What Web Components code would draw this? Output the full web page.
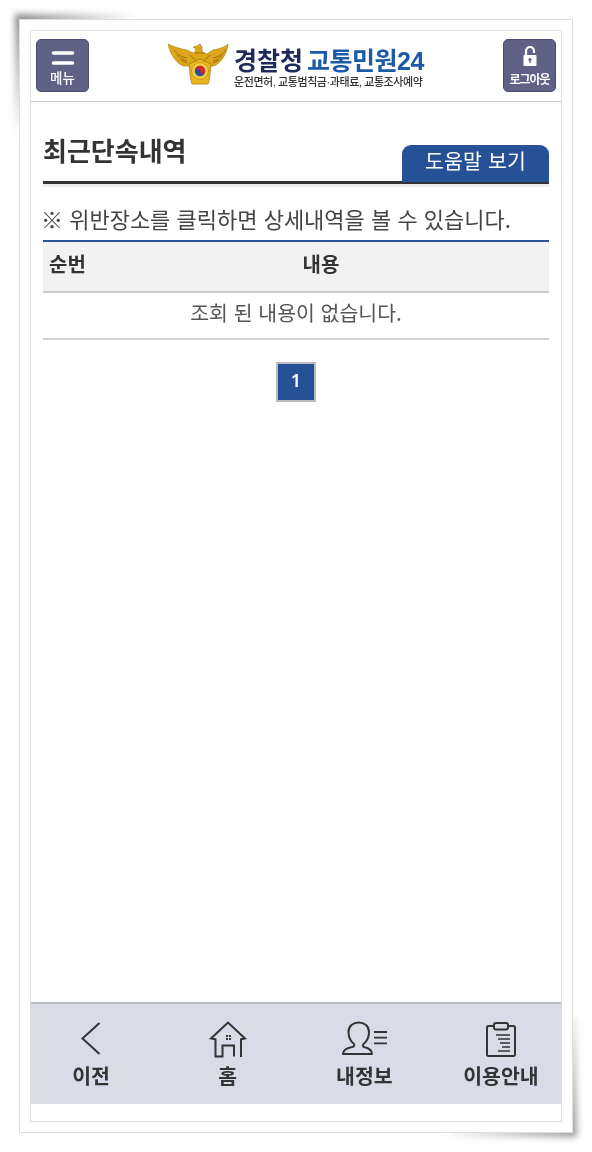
<!DOCTYPE html>
<html lang="ko">
<head>
<meta charset="utf-8">
<title>최근단속내역</title>
<style>
    html, body { margin: 0; background: #fff; }
    body {
        height: 1152px;
        overflow: hidden;
        font-family: "Noto Sans CJK KR", "Noto Sans", sans-serif;
        color: #333;
    }
</style>
</head>
<body>
<app-frame>
    <top-bar slot="top">
        <side-button slot="left" label="메뉴">
            <svg width="24" height="16" viewBox="0 0 24 16"><path d="M2.500 3h19M2.500 13h19" stroke="#fff" stroke-width="3.600" stroke-linecap="round"/></svg>
        </side-button>
        <brand-logo slot="center"></brand-logo>
        <side-button slot="right" label="로그아웃" small>
            <svg width="14" height="21" viewBox="0 0 14 21">
                <path d="M3 9V5a4 4 0 0 1 8 0V7" fill="none" stroke="#fff" stroke-width="2.200"/>
                <rect x=".5" y="9" width="13" height="11" rx="1" fill="#fff"/>
                <circle cx="7" cy="13.500" r="1.600" fill="#5f6285"/>
                <rect x="6.300" y="13.500" width="1.400" height="3.500" fill="#5f6285"/>
            </svg>
        </side-button>
    </top-bar>
    <section-title>최근단속내역<span slot="action">도움말 보기</span></section-title>
    <notice-line>※ 위반장소를 클릭하면 상세내역을 볼 수 있습니다.</notice-line>
    <result-table first="순번" second="내용">조회 된 내용이 없습니다.</result-table>
    <page-nav current="1"></page-nav>
    <bottom-nav slot="bottom">
        <nav-item label="이전">
            <svg width="40" height="38" viewBox="0 0 40 38"><path d="M28.500 3 11.500 18.500 28.500 34" fill="none" stroke="#333" stroke-width="2"/></svg>
        </nav-item>
        <nav-item label="홈">
            <svg width="40" height="38" viewBox="0 0 40 38" fill="none" stroke="#333" stroke-width="2">
                <path d="M8 19.500 3 18.500 20 2.500l17 16-4.500 1"/>
                <path d="M7.500 18.500V36.500h7V25.500h11.500V36.500M33 18.500V37" />
                <path d="M18 15h2v2h-2zM21 15h2v2h-2zM18 18h2v2h-2zM21 18h2v2h-2z" fill="#333" stroke="none"/>
            </svg>
        </nav-item>
        <nav-item label="내정보">
            <svg width="46" height="38" viewBox="0 0 46 38" fill="none" stroke="#333" stroke-width="2">
                <path d="M13 24C9 21 7.500 17 7.500 12 7.500 6 12 2.500 17.700 2.500S28 6 28 12c0 5-1.500 9-5.500 12-1 1-.5 2.500.5 3 4 1 8 3 8 7H2c0-4 4-6 9-7 2-.5 3-1.500 2-3z" stroke-linejoin="round"/>
                <path d="M33 12h13M33 17.700h13M33 23.300h13" stroke-width="1.800"/>
            </svg>
        </nav-item>
        <nav-item label="이용안내">
            <svg width="34" height="38" viewBox="0 0 34 38" fill="none" stroke="#333" stroke-width="2">
                <path d="M10 6H4.500A1.500 1.500 0 0 0 3 7.500v27A1.500 1.500 0 0 0 4.500 36h25a1.500 1.500 0 0 0 1.500-1.500v-27A1.500 1.500 0 0 0 29.500 6H24"/>
                <rect x="10" y="3" width="14" height="6.500" rx="2"/>
                <path d="M12 15h14M14 19h12M16 23h10M18 27h8M14 31h12" stroke-width="1.500"/>
            </svg>
        </nav-item>
    </bottom-nav>
</app-frame>

<template id="app-frame-tpl">
    <style>
        :host {
            display: block;
            position: relative;
            isolation: isolate;
            box-sizing: border-box;
            width: 554px;
            height: 1114px;
            margin: 19px 0 0 19px;
        }
        .shade {
            position: absolute;
            z-index: -1;
            filter: blur(3px);
        }
        .tl {
            left: -4px;
            top: -5px;
            width: 125px;
            height: 125px;
            background: linear-gradient(135deg, #888 0, rgba(160,160,160,0) 50%);
        }
        .br {
            right: -4px;
            bottom: -4px;
            width: 160px;
            height: 120px;
            background: linear-gradient(315deg, #999 0, rgba(180,180,180,0) 50%);
        }
        .sheet {
            box-sizing: border-box;
            height: 100%;
            padding: 10px;
            background: #fff;
            border: 1px solid #ddd;
        }
        .screen {
            box-sizing: border-box;
            height: 100%;
            display: flex;
            flex-direction: column;
            border: 1px solid #ddd;
            border-top-color: #e8e8e8;
            filter: blur(.35px);
        }
        .body { flex: 1; padding: 0 12px; }
        .gap { height: 17px; }
    </style>
    <div class="shade tl"></div>
    <div class="shade br"></div>
    <div class="sheet">
        <div class="screen">
            <slot name="top"></slot>
            <div class="body"><slot></slot></div>
            <slot name="bottom"></slot>
            <div class="gap"></div>
        </div>
    </div>
</template>

<template id="top-bar-tpl">
    <style>
        :host {
            display: flex;
            box-sizing: border-box;
            height: 71px;
            padding: 8px 5px 0;
            align-items: flex-start;
            justify-content: space-between;
            border-bottom: 1px solid #ccc;
        }
    </style>
    <slot name="left"></slot>
    <slot name="center"></slot>
    <slot name="right"></slot>
</template>

<template id="side-button-tpl">
    <style>
        :host {
            display: flex;
            flex-direction: column;
            align-items: center;
            box-sizing: border-box;
            width: 53px;
            height: 53px;
            background: #5f6285;
            border: 1px solid #4b4e70;
            border-radius: 5px;
            color: #fff;
        }
        .icon { height: 26px; display: flex; align-items: flex-end; }
        :host([small]) .icon { height: 27px; }
        .label { font-size: 13.500px; font-weight: 500; line-height: 15px; margin-top: 4px; white-space: nowrap; }
        :host([small]) .label { font-size: 12px; font-weight: 700; margin-top: 4px; letter-spacing: -1px; }
    </style>
    <div class="icon"><slot></slot></div>
    <div class="label"></div>
</template>

<template id="brand-logo-tpl">
    <style>
        :host { display: flex; width: 256px; height: 44px; margin-top: 4px; align-items: flex-start; }
        svg { flex: none; display: block; }
        .words { margin-left: 2px; margin-top: 5px; }
        .name {
            font-family: "Liberation Sans", "Noto Sans CJK KR", sans-serif;
            font-size: 25px;
            line-height: 27px;
            font-weight: 700;
            white-space: nowrap;
            color: #1e2a5e;
        }
        .name span { color: #1b5aa8; margin-left: 4px; letter-spacing: -.5px; }
        .sub {
            font-family: "Liberation Sans", "Noto Sans CJK KR", sans-serif;
            font-size: 11px;
            line-height: 13px;
            font-weight: 500;
            margin-top: 1px;
            color: #333;
            white-space: nowrap;
            letter-spacing: -.42px;
        }
    </style>
    <svg width="64" height="42" viewBox="0 0 64 42">
        <path d="M0 1C6 4 13 6 19 7l6 3 2-1 1-3-3-2 4-1 3-2 2 3 0 4 2 2 3 1 6-4c6-1 12-3 15-6-1 10-7 19-14 22l-6 0-3 3H24l-3-3-6 0C8 20 2 11 0 1z" fill="#dea71b" stroke="#a9780f" stroke-width=".6"/>
        <path d="M6 7c4 5 8 7 13 8M9 12c3 3 6 5 10 6M13 17c2 1 4 2 6 3M58 7c-4 5-8 7-13 8M55 12c-3 3-6 5-10 6M51 17c-2 1-4 2-6 3M27 10l10 0M22 12l6 6M42 12l-6 6" fill="none" stroke="#96690c" stroke-width=".9"/>
        <path d="M32 16l11 5 -1.500 14-1.500 6H24l-1.500-6L21 21z" fill="#ecb71e" stroke="#a9780f" stroke-width=".8"/>
        <circle cx="32" cy="28" r="8.500" fill="#f4cc3f" stroke="#b98b12" stroke-width=".7"/>
        <circle cx="32" cy="28" r="5.200" fill="#2c4f9e"/>
        <path d="M26.800 28a5.200 5.200 0 0 1 10.400 0 2.600 2.600 0 0 1-5.200 0 2.600 2.600 0 0 0-5.200 0z" fill="#d3272e"/>
    </svg>
    <div class="words">
        <div class="name">경찰청<span>교통민원24</span></div>
        <div class="sub">운전면허, 교통범칙금·과태료, 교통조사예약</div>
    </div>
</template>

<template id="section-title-tpl">
    <style>
        :host {
            display: flex;
            justify-content: space-between;
            box-sizing: border-box;
            height: 39px;
            margin-top: 43px;
            border-bottom: 3px solid #333;
            box-shadow: 0 3px 0 #eee;
        }
        h2 { margin: -2px 0 0; font-size: 26px; line-height: 14px; font-weight: 700; color: #333; }
        .tab {
            box-sizing: border-box;
            width: 147px;
            height: 37px;
            border-radius: 9px 9px 0 0;
            background: #265196;
            color: #fff;
            font-size: 20.500px;
            line-height: 31px;
            text-align: center;
            letter-spacing: .2px;
        }
    </style>
    <h2><slot></slot></h2>
    <div class="tab"><slot name="action"></slot></div>
</template>

<template id="notice-line-tpl">
    <style>
        :host {
            display: block;
            margin: 20px 0 0 -2px;
            padding-bottom: 8px;
            font-size: 22px;
            line-height: 28px;
            color: #444;
            white-space: nowrap;
        }
    </style>
    <slot></slot>
</template>

<template id="result-table-tpl">
    <style>
        :host {
            display: block;
            border-top: 2px solid #2d5596;
        }
        .head {
            display: grid;
            grid-template-columns: 50px 1fr;
            height: 51px;
            padding-bottom: 6px;
            box-sizing: border-box;
            align-items: center;
            background: #f2f2f2;
            border-bottom: 2px solid #ccc;
            font-size: 20px;
            font-weight: 700;
            color: #333;
        }
        .head div:first-child { padding-left: 6px; white-space: nowrap; }
        .head div:last-child { text-align: center; }
        .row {
            height: 47px;
            box-sizing: border-box;
            line-height: 39px;
            text-align: center;
            font-size: 20.500px;
            color: #555;
            border-bottom: 2px solid #d4d4d4;
        }
    </style>
    <div class="head"><div class="a"></div><div class="b"></div></div>
    <div class="row"><slot></slot></div>
</template>

<template id="page-nav-tpl">
    <style>
        :host { display: flex; justify-content: center; margin-top: 22px; }
        span {
            box-sizing: border-box;
            width: 40px;
            height: 40px;
            background: #265196;
            border: 2px solid #bbb;
            color: #fff;
            font: 600 18px/33px "Noto Sans", sans-serif;
            text-align: center;
        }
    </style>
    <span></span>
</template>

<template id="bottom-nav-tpl">
    <style>
        :host {
            display: flex;
            justify-content: space-between;
            box-sizing: border-box;
            height: 102px;
            padding: 0 20px;
            background: #d9dbe7;
            border-top: 2px solid #bbb;
        }
    </style>
    <slot></slot>
</template>

<template id="nav-item-tpl">
    <style>
        :host {
            display: flex;
            flex-direction: column;
            align-items: center;
            width: 80px;
            padding-top: 16px;
            box-sizing: border-box;
        }
        .icon { height: 38px; display: flex; }
        .label { font-size: 20.500px; font-weight: 700; line-height: 26px; margin-top: 4px; color: #333; white-space: nowrap; }
    </style>
    <div class="icon"><slot></slot></div>
    <div class="label"></div>
</template>

<script>
    // plain elements: template only
    function plain(name) {
        customElements.define(name, class extends HTMLElement {
            constructor() {
                super();
                const root = this.attachShadow({ mode: 'open' });
                root.appendChild(document.getElementById(name + '-tpl').content.cloneNode(true));
            }
        });
    }
    ['app-frame', 'top-bar', 'brand-logo', 'section-title', 'notice-line', 'bottom-nav'].forEach(plain);

    class LabelledItem extends HTMLElement {
        constructor() {
            super();
            const root = this.attachShadow({ mode: 'open' });
            root.appendChild(document.getElementById(this.localName + '-tpl').content.cloneNode(true));
        }

        connectedCallback() {
            this.shadowRoot.querySelector('.label').textContent = this.getAttribute('label');
        }
    }
    customElements.define('side-button', class extends LabelledItem {});
    customElements.define('nav-item', class extends LabelledItem {});

    customElements.define('result-table', class extends HTMLElement {
        constructor() {
            super();
            const root = this.attachShadow({ mode: 'open' });
            root.appendChild(document.getElementById('result-table-tpl').content.cloneNode(true));
        }

        connectedCallback() {
            this.shadowRoot.querySelector('.a').textContent = this.getAttribute('first');
            this.shadowRoot.querySelector('.b').textContent = this.getAttribute('second');
        }
    });

    customElements.define('page-nav', class extends HTMLElement {
        constructor() {
            super();
            const root = this.attachShadow({ mode: 'open' });
            root.appendChild(document.getElementById('page-nav-tpl').content.cloneNode(true));
        }

        connectedCallback() {
            this.shadowRoot.querySelector('span').textContent = this.getAttribute('current');
        }
    });
</script>
</body>
</html>
